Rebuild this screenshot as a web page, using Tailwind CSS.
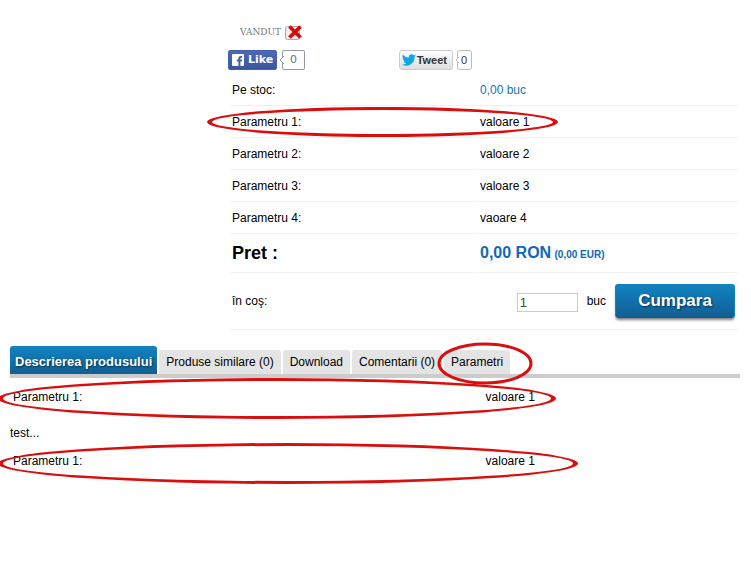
<!DOCTYPE html>
<html lang="ro">
<head>
  <meta charset="UTF-8" />
  <meta name="viewport" content="width=device-width, initial-scale=1" />
  <title>Produs</title>
  <script src="https://cdn.jsdelivr.net/npm/@tailwindcss/browser@4"></script>
</head>
<body class="min-h-screen bg-white text-black text-xs font-['Liberation_Sans',Arial,sans-serif] overflow-x-hidden">

  <main class="pt-6 pl-[10px] pr-[11px]">

    <section class="ml-[218px]">
      <!-- Sold flag -->
      <div class="flex items-center gap-1 h-4 pl-3">
        <span class="font-['DejaVu_Serif',serif] text-[9px] text-[#777]">VANDUT</span>
        <svg class="w-[18px] h-4" viewBox="0 0 18 16" role="img" aria-label="Da">
          <rect x="0.5" y="2.5" width="14" height="13" rx="2" fill="#eee" stroke="#aaa" />
          <path d="M4.500 2.500l11 11M15.500 2.500l-11 11" stroke="#de0a0a" stroke-width="3.8" />
        </svg>
      </div>

      <!-- Social buttons -->
      <div class="flex mt-[10px] h-5">
        <div class="w-1/3 flex gap-1">
          <button type="button" class="flex items-center gap-1 h-5 w-[49px] pl-[3px] rounded-xs bg-linear-to-b from-[#4c69ba] to-[#3b55a0] border border-[#4560ab] text-white font-bold text-[11px] font-['DejaVu_Sans',sans-serif]">
            <svg class="w-3 h-3 shrink-0" viewBox="0 0 12 12">
              <rect width="12" height="12" rx="1" fill="#fff" />
              <path d="M6.4 12V7.5H4.8V5.6h1.6V4.3C6.4 2.7 7.4 2 8.800 2h1.300v1.800H9.200c-.6 0-.8.3-.8.8v1H10l-.2 1.900H8.400V12z" fill="#4460ae" />
            </svg>
            Like
          </button>
          <span class="relative ml-px h-5 w-[23px] flex items-center justify-center border border-[#9197a3] rounded-xs text-[11px] text-[#6a7180] font-['DejaVu_Sans',sans-serif]">
            <svg class="absolute -left-1 top-[5px] w-[5px] h-2" viewBox="0 0 5 8"><path d="M5 0L1 4l4 4" fill="#fff" stroke="#9197a3" /></svg>
            0
          </span>
        </div>
        <div class="flex gap-1">
          <button type="button" class="flex items-center gap-px h-5 w-[54px] pl-[2px] rounded-[3px] bg-linear-to-b from-white to-[#dedede] border border-[#ccc] text-[#333] font-bold text-[11px]">
            <svg class="w-[14px] h-3 shrink-0" viewBox="0 0 24 20">
              <path d="M24 2.400a10 10 0 0 1-2.800.8A5 5 0 0 0 23.300.5a10 10 0 0 1-3.100 1.200 4.900 4.900 0 0 0-8.400 4.500A14 14 0 0 1 1.700 1a4.900 4.900 0 0 0 1.500 6.600A5 5 0 0 1 1 7v.1a4.900 4.900 0 0 0 3.900 4.800 5 5 0 0 1-2.200.1 4.900 4.900 0 0 0 4.600 3.400A9.900 9.900 0 0 1 0 17.500 14 14 0 0 0 21.500 5z" fill="#12a5e8" />
            </svg>
            Tweet
          </button>
          <span class="relative h-5 w-[15px] flex items-center justify-center border border-[#bbb] rounded-[3px] text-[11px] text-[#333]">
            <svg class="absolute -left-[3px] top-[6px] w-1 h-[6px]" viewBox="0 0 4 6"><path d="M4 0L1 3l3 3" fill="#fff" stroke="#bbb" /></svg>
            0
          </span>
        </div>
      </div>

      <table class="w-full mt-1 table-fixed border-separate border-spacing-x-[2px] border-spacing-y-0 [&_td]:border-b [&_td]:border-[#f0f0f0] [&_td]:px-[2px] [&_th]:border-b [&_th]:border-[#f0f0f0] [&_th]:px-[2px] [&_th]:text-left">
        <tbody>
          <tr class="h-8">
            <th class="w-[246px] font-normal">Pe stoc:</th>
            <td class="text-[#1a72b8]">0,00 buc</td>
          </tr>
          <tr class="h-8">
            <th class="relative font-normal">
              Parametru 1:
              <svg class="absolute -left-[23px] top-[1px] w-[351px] h-[30px] max-w-none pointer-events-none z-10" viewBox="0 0 351 30">
                <path fill="#d90f0f" fill-rule="evenodd" d="M0 15a175 15 0 0 1 351 0a175 15 0 0 1-351 0zM5 15a170 12 0 0 0 341 0a170 12 0 0 0-341 0z" />
              </svg>
            </th>
            <td>valoare 1</td>
          </tr>
          <tr class="h-8">
            <th class="font-normal">Parametru 2:</th>
            <td>valoare 2</td>
          </tr>
          <tr class="h-8">
            <th class="font-normal">Parametru 3:</th>
            <td>valoare 3</td>
          </tr>
          <tr class="h-8">
            <th class="font-normal">Parametru 4:</th>
            <td>vaoare 4</td>
          </tr>
          <tr class="h-[39px]">
            <th class="text-lg font-bold">Pret :</th>
            <td class="font-bold text-[#0f68b4]"><span class="text-base">0,00 RON</span> <span class="text-[10px]">(0,00 EUR)</span></td>
          </tr>
          <tr class="h-[57px]">
            <td colspan="2">
              <div class="flex items-center pr-px">
                <label for="qty" class="mr-auto">în coş:</label>
                <input id="qty" type="text" value="1" class="w-[61px] h-[19px] mt-[2px] px-[2px] border border-[#ccc] text-[13px] text-[#444]" />
                <span class="mx-[9px]">buc</span>
                <button type="button" class="w-[120px] h-[34px] rounded-[3px] border border-[#1480bb] border-b-[#0e5c8c] bg-linear-to-b from-[#1083c2] to-[#115f92] text-white font-bold text-[17px] shadow-[0_3px_3px_-1px_rgba(0,0,0,0.5)] text-shadow-[1px_1px_2px_rgba(0,0,0,0.6)]">Cumpara</button>
              </div>
            </td>
          </tr>
        </tbody>
      </table>
    </section>

    <!-- Tabs -->
    <nav class="flex items-end gap-[2px] mt-4 border-b-4 border-[#ccc]">
      <a href="#descriere" class="h-7 leading-[30px] px-[5px] rounded-t-[3px] border-t border-[#1480bb] bg-linear-to-b from-[#1083c2] to-[#115f92] text-white font-bold text-[13px] text-shadow-[1px_1px_2px_rgba(0,0,0,0.6)]">Descrierea produsului</a>
      <a href="#similare" class="h-6 leading-6 px-[7px] rounded-t-[3px] bg-[#e4e4e4]">Produse similare (0)</a>
      <a href="#download" class="h-6 leading-6 px-[7px] rounded-t-[3px] bg-[#e4e4e4]">Download</a>
      <a href="#comentarii" class="h-6 leading-6 px-[7px] rounded-t-[3px] bg-[#e4e4e4]">Comentarii (0)</a>
      <a href="#parametri" class="relative h-6 leading-6 px-[7px] rounded-t-[3px] bg-[#e4e4e4]">
        Parametri
        <svg class="absolute -left-[7px] -top-2 w-[96px] h-[43px] max-w-none pointer-events-none z-10" viewBox="0 0 96 43">
          <ellipse cx="48" cy="21.5" rx="46" ry="19.5" fill="none" stroke="#d90f0f" stroke-width="3" />
        </svg>
      </a>
    </nav>

    <!-- Tab content -->
    <div id="descriere">
      <dl class="relative flex h-9 pl-[3px] pt-[11px]">
        <dt class="w-[65%]">Parametru 1:</dt>
        <dd>valoare 1</dd>
        <svg class="absolute -left-[12px] top-0 w-[558px] h-[41px] max-w-none pointer-events-none" viewBox="0 0 558 41">
          <path fill="#d90f0f" fill-rule="evenodd" d="M0 20.500a279 20.500 0 0 1 558 0a279 20.500 0 0 1-558 0zM5 20.500a274 17.500 0 0 0 548 0a274 17.500 0 0 0-548 0z" />
        </svg>
      </dl>
      <p class="mt-[11px]">test...</p>
      <dl class="relative flex h-9 mt-[1px] pl-[3px] pt-[11px]">
        <dt class="w-[65%]">Parametru 1:</dt>
        <dd>valoare 1</dd>
        <svg class="absolute -left-[12px] top-px w-[580px] h-[41px] max-w-none pointer-events-none" viewBox="0 0 580 41">
          <path fill="#d90f0f" fill-rule="evenodd" d="M0 20.500a290 20.500 0 0 1 580 0a290 20.500 0 0 1-580 0zM5 20.500a285 17.500 0 0 0 570 0a285 17.500 0 0 0-570 0z" />
        </svg>
      </dl>
    </div>

  </main>

</body>
</html>
